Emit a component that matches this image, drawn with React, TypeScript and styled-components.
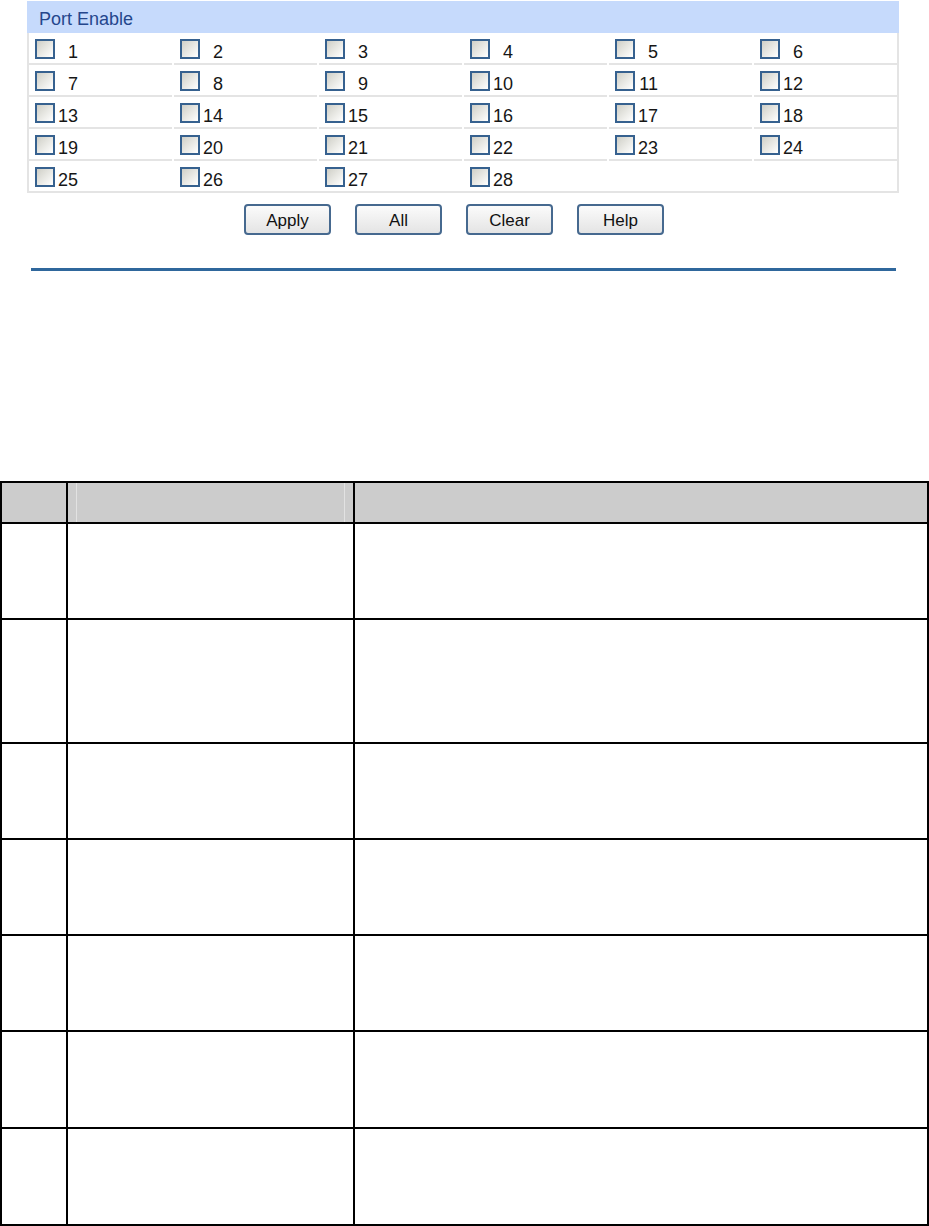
import React from "react";
import styled, { createGlobalStyle } from "styled-components";

const GlobalStyle = createGlobalStyle`
  html, body {
    margin: 0;
    padding: 0;
    background: #ffffff;
  }
  body {
    font-family: "Liberation Sans", Arial, sans-serif;
  }
`;

const Page = styled.div`
  width: 929px;
  display: flex;
  flex-direction: column;
`;

const Top = styled.section`
  display: flex;
  flex-direction: column;
  padding: 1px 30px 0 27px;
`;

const Panel = styled.div`
  width: 872px;
  display: flex;
  flex-direction: column;
`;

const PanelHeader = styled.div`
  height: 32px;
  box-sizing: border-box;
  padding: 4px 0 0 12px;
  line-height: 28px;
  background: #c6dafc;
  color: #24468c;
  font-size: 18px;
`;

const PortGrid = styled.div`
  display: grid;
  grid-template-columns: repeat(6, 1fr);
  column-gap: 2px;
  border: 2px solid #e4e4e4;
  border-top: none;
  background: #ffffff;
`;

const PortCell = styled.label<{ $last: boolean }>`
  height: 30px;
  display: flex;
  align-items: center;
  padding-left: 6px;
  border-bottom: ${(p) => (p.$last ? "none" : "2px solid #e4e4e4")};
`;

const Box = styled.span`
  width: 20px;
  height: 20px;
  margin-top: 1px;
  box-sizing: border-box;
  border: 2px solid #36618f;
  background: linear-gradient(135deg, #cfcfc7 0%, #eaeae6 55%, #ffffff 100%);
  flex: none;
`;

const PortNum = styled.span`
  margin-left: 3px;
  margin-top: 7px;
  min-width: 2ch;
  text-align: right;
  font-size: 18px;
  line-height: 18px;
  color: #161616;
`;

const ButtonBar = styled.div`
  display: flex;
  justify-content: center;
  gap: 24px;
  margin-top: 11px;
  padding-right: 18px;
`;

const Button = styled.button`
  width: 87px;
  height: 31px;
  box-sizing: border-box;
  border: 2px solid #46698f;
  border-radius: 4px;
  background: linear-gradient(#fbfbfb, #e4e4e4);
  font-family: "Liberation Sans", Arial, sans-serif;
  font-size: 17px;
  color: #111;
  padding: 2px 0 0;
  cursor: pointer;
`;

const Rule = styled.div`
  height: 3px;
  margin: 33px 3px 0 4px;
  background: #2f679c;
`;

const DescTable = styled.table`
  margin-top: 210px;
  width: 929px;
  border-collapse: collapse;
  table-layout: fixed;
`;

const Th = styled.th<{ $w?: number }>`
  ${(p) => (p.$w ? `width: ${p.$w}px;` : "")}
  height: 39px;
  padding: 0;
  border: 2px solid #000;
  background: #cccccc;
`;

const HeadInner = styled.div`
  height: 39px;
  margin: 0 8px;
  border-left: 1px solid #e2e2e2;
  border-right: 1px solid #e2e2e2;
`;

const Td = styled.td<{ $h: number }>`
  height: ${(p) => p.$h}px;
  padding: 0;
  border: 2px solid #000;
  background: #ffffff;
`;

const ports = Array.from({ length: 28 }, (_, i) => i + 1);
const rowHeights = [94, 122, 94, 94, 94, 95, 95];

export default function App() {
  return (
    <>
      <GlobalStyle />
      <Page>
        <Top>
          <Panel>
            <PanelHeader>Port Enable</PanelHeader>
            <PortGrid>
              {ports.map((n) => (
                <PortCell key={n} $last={n > 24}>
                  <Box />
                  <PortNum>{n}</PortNum>
                </PortCell>
              ))}
              <PortCell $last />
              <PortCell $last />
            </PortGrid>
          </Panel>
          <ButtonBar>
            <Button>Apply</Button>
            <Button>All</Button>
            <Button>Clear</Button>
            <Button>Help</Button>
          </ButtonBar>
          <Rule />
        </Top>
        <DescTable>
          <thead>
            <tr>
              <Th $w={64} />
              <Th $w={285}>
                <HeadInner />
              </Th>
              <Th />
            </tr>
          </thead>
          <tbody>
            {rowHeights.map((h, i) => (
              <tr key={i}>
                <Td $h={h} />
                <Td $h={h} />
                <Td $h={h} />
              </tr>
            ))}
          </tbody>
        </DescTable>
      </Page>
    </>
  );
}
